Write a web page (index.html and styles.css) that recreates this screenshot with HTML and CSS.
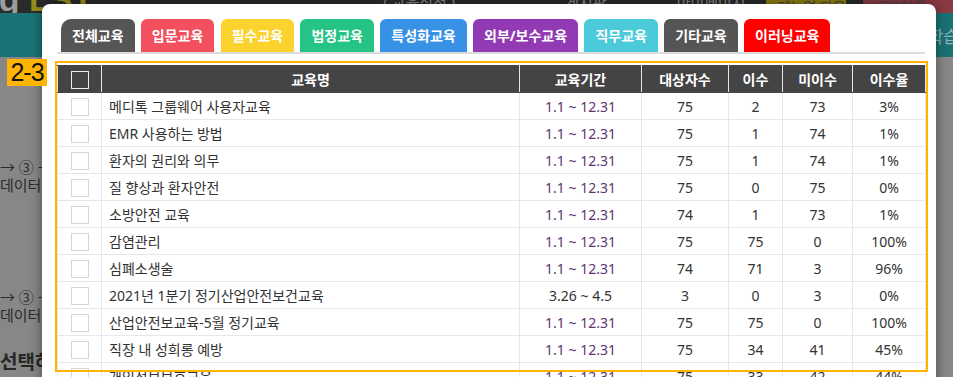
FILE: index.html
```html
<!DOCTYPE html>
<html lang="ko">
<head>
	<meta charset="utf-8">
	<title>교육 현황</title>
	<link rel="stylesheet" href="styles.css">
</head>
<body>
	<!-- 뒤쪽 페이지 (모달 아래에 어둡게 깔림) -->
	<div class="page">
		<header class="top-bar">
			<div class="logo"><span class="logo-g">ng</span> <span class="logo-lst">LST</span></div>
			<span class="top-menu menu-1">( 교육신청 )</span>
			<span class="top-menu menu-2">게시판</span>
			<span class="top-menu menu-3">마이페이지</span>
			<span class="top-btn btn-yellow">메뉴얼 다운로드</span>
			<span class="top-btn btn-red">로그아웃</span>
		</header>
		<nav class="sub-bar">
			<span class="sub-text">학습</span>
		</nav>
		<main class="content">
			<p class="step step-first">② → ③ → ④</p>
			<p class="step">데이터업로드</p>
			<p class="step step-second">② → ③ → ④</p>
			<p class="step">데이터업로드</p>
			<p class="step-title">선택하세요</p>
		</main>
	</div>

	<!-- 교육 현황 모달 -->
	<div class="modal">
		<div class="tab-bar">
			<span class="tab tab-all">전체교육</span>
			<span class="tab tab-intro">입문교육</span>
			<span class="tab tab-must">필수교육</span>
			<span class="tab tab-law">법정교육</span>
			<span class="tab tab-special">특성화교육</span>
			<span class="tab tab-outside">외부/보수교육</span>
			<span class="tab tab-job">직무교육</span>
			<span class="tab tab-etc">기타교육</span>
			<span class="tab tab-elearn">이러닝교육</span>
		</div>

		<table class="edu-table">
			<colgroup>
				<col class="c-check">
				<col class="c-name">
				<col class="c-period">
				<col class="c-target">
				<col class="c-done">
				<col class="c-undone">
				<col class="c-rate">
			</colgroup>
			<thead>
				<tr>
					<th><span class="chk chk-head"></span></th>
					<th>교육명</th>
					<th>교육기간</th>
					<th>대상자수</th>
					<th>이수</th>
					<th>미이수</th>
					<th>이수율</th>
				</tr>
			</thead>
			<tbody>
				<tr>
					<td><span class="chk"></span></td>
					<td class="name">메디톡 그룹웨어 사용자교육</td>
					<td class="year">1.1 ~ 12.31</td>
					<td>75</td><td>2</td><td>73</td><td>3%</td>
				</tr>
				<tr>
					<td><span class="chk"></span></td>
					<td class="name">EMR 사용하는 방법</td>
					<td class="year">1.1 ~ 12.31</td>
					<td>75</td><td>1</td><td>74</td><td>1%</td>
				</tr>
				<tr>
					<td><span class="chk"></span></td>
					<td class="name">환자의 권리와 의무</td>
					<td class="year">1.1 ~ 12.31</td>
					<td>75</td><td>1</td><td>74</td><td>1%</td>
				</tr>
				<tr>
					<td><span class="chk"></span></td>
					<td class="name">질 향상과 환자안전</td>
					<td class="year">1.1 ~ 12.31</td>
					<td>75</td><td>0</td><td>75</td><td>0%</td>
				</tr>
				<tr>
					<td><span class="chk"></span></td>
					<td class="name">소방안전 교육</td>
					<td class="year">1.1 ~ 12.31</td>
					<td>74</td><td>1</td><td>73</td><td>1%</td>
				</tr>
				<tr>
					<td><span class="chk"></span></td>
					<td class="name">감염관리</td>
					<td class="year">1.1 ~ 12.31</td>
					<td>75</td><td>75</td><td>0</td><td>100%</td>
				</tr>
				<tr>
					<td><span class="chk"></span></td>
					<td class="name">심폐소생술</td>
					<td class="year">1.1 ~ 12.31</td>
					<td>74</td><td>71</td><td>3</td><td>96%</td>
				</tr>
				<tr>
					<td><span class="chk"></span></td>
					<td class="name">2021년 1분기 정기산업안전보건교육</td>
					<td>3.26 ~ 4.5</td>
					<td>3</td><td>0</td><td>3</td><td>0%</td>
				</tr>
				<tr>
					<td><span class="chk"></span></td>
					<td class="name">산업안전보교육-5월 정기교육</td>
					<td class="year">1.1 ~ 12.31</td>
					<td>75</td><td>75</td><td>0</td><td>100%</td>
				</tr>
				<tr>
					<td><span class="chk"></span></td>
					<td class="name">직장 내 성희롱 예방</td>
					<td class="year">1.1 ~ 12.31</td>
					<td>75</td><td>34</td><td>41</td><td>45%</td>
				</tr>
				<tr>
					<td><span class="chk"></span></td>
					<td class="name">개인정보보호교육</td>
					<td class="year">1.1 ~ 12.31</td>
					<td>75</td><td>33</td><td>42</td><td>44%</td>
				</tr>
			</tbody>
		</table>
	</div>

	<!-- 설명용 표시 -->
	<div class="mark-label">2-3</div>
	<div class="mark-box"></div>
</body>
</html>
```

FILE: styles.css
```css
body {
	font-family: "Noto Sans", "Noto Sans CJK KR", sans-serif;
	margin: 0;
	padding: 0;
	width: 953px;
	height: 377px;
	overflow: hidden;
	position: relative;
	background-color: #878787;
	color: #333;
}

/* 뒤쪽 페이지 */
.page {
	width: 100%;
	height: 100%;
}

.top-bar {
	display: flex;
	align-items: flex-start;
	height: 13px;
	overflow: hidden;
	background-color: #2a2a2a;
}

.logo {
	font-family: "Liberation Sans", sans-serif;
	font-size: 34px;
	font-weight: bold;
	line-height: 34px;
	margin-top: -18px;
	margin-left: -22px;
	white-space: nowrap;
}

.logo-g {
	color: #9c9c9c;
}

.logo-lst {
	color: #958f1e;
}

.top-menu {
	font-size: 15px;
	line-height: 18px;
	margin-top: -7px;
	color: #8a8a8a;
	white-space: nowrap;
}

.menu-1 {
	margin-left: 290px;
}

.menu-2 {
	margin-left: 110px;
}

.menu-3 {
	margin-left: 70px;
}

.top-btn {
	font-size: 14px;
	height: 13px;
	line-height: 13px;
	padding: 0 12px;
	color: #444;
	white-space: nowrap;
}

.btn-yellow {
	margin-left: 20px;
	width: 56px;
	overflow: hidden;
	background-color: #8d7d12;
}

.btn-red {
	margin-left: auto;
	width: 66px;
	background-color: #8a3a44;
}

.sub-bar {
	display: flex;
	justify-content: flex-end;
	align-items: center;
	height: 44px;
	background-color: #1a7274;
	overflow: hidden;
}

.sub-text {
	font-size: 17px;
	color: #8fb5b5;
	margin-right: -6px;
}

.content {
	padding-top: 101px;
}

.step {
	margin: 0;
	font-size: 15px;
	line-height: 18px;
	color: #2b2b2b;
	white-space: nowrap;
}

.step-first,
.step-second {
	margin-left: -19px;
}

.step-second {
	margin-top: 94px;
}

.step-title {
	margin: 28px 0 0;
	font-size: 19px;
	font-weight: bold;
	line-height: 20px;
	color: #262626;
}

/* 모달 */
.modal {
	position: absolute;
	left: 42px;
	top: 4px;
	width: 894px;
	height: 420px;
	box-sizing: border-box;
	padding: 15px 11px 0 15px;
	background-color: #fff;
	border-radius: 8px 8px 0 0;
	box-shadow: 0 0 12px rgba(0, 0, 0, 0.45);
}

.tab-bar {
	display: flex;
	gap: 6.3px;
	padding-left: 4px;
	border-bottom: 2px solid #dcdcdc;
}

.tab {
	height: 33px;
	line-height: 33px;
	padding: 0 11px;
	font-size: 14px;
	font-weight: bold;
	color: #fff;
	border-radius: 6px 6px 0 0;
	white-space: nowrap;
}

.tab-all {
	background-color: #555;
	border-radius: 10px 6px 0 0;
}

.tab-intro {
	background-color: #f2505e;
}

.tab-must {
	background-color: #fcd22e;
}

.tab-law {
	background-color: #25c384;
}

.tab-special {
	background-color: #3792e5;
}

.tab-outside {
	background-color: #913ab3;
}

.tab-job {
	background-color: #4bcbd9;
}

.tab-etc {
	background-color: #555;
}

.tab-elearn {
	background-color: #ff0000;
}

.edu-table {
	margin-top: 11px;
	width: 868px;
	table-layout: fixed;
	border-collapse: collapse;
}

.c-check { width: 44px; }
.c-name { width: 418px; }
.c-period { width: 122px; }
.c-target { width: 87px; }
.c-done { width: 54px; }
.c-undone { width: 70px; }
.c-rate { width: 73px; }

.edu-table th,
.edu-table td {
	height: 26px;
	padding: 0;
	text-align: center;
	border: 1px solid #e4e8ec;
	white-space: nowrap;
	overflow: hidden;
}

.edu-table th {
	background-color: #444;
	color: #fff;
	font-size: 14px;
	font-weight: bold;
	border-color: #444 #e6e6e6;
}

.edu-table td {
	font-size: 14px;
	color: #333;
}

.edu-table td.name {
	text-align: left;
	padding-left: 7px;
}

.edu-table td.year {
	color: #5e3470;
}

.chk {
	display: inline-block;
	width: 16px;
	height: 16px;
	border: 1px solid #d6d6d6;
	background-color: #fff;
	vertical-align: middle;
}

.chk-head {
	border-color: #eee;
	background-color: transparent;
}

/* 설명용 표시 */
.mark-label {
	position: absolute;
	left: 7px;
	top: 59px;
	width: 40px;
	height: 27px;
	background-color: #ffb400;
	font-family: "Liberation Sans", sans-serif;
	font-size: 25px;
	line-height: 27px;
	letter-spacing: -1px;
	text-align: center;
	color: #111;
}

.mark-box {
	position: absolute;
	left: 55px;
	top: 61px;
	width: 873px;
	height: 311px;
	box-sizing: border-box;
	border: 2px solid #ffb400;
}
```
